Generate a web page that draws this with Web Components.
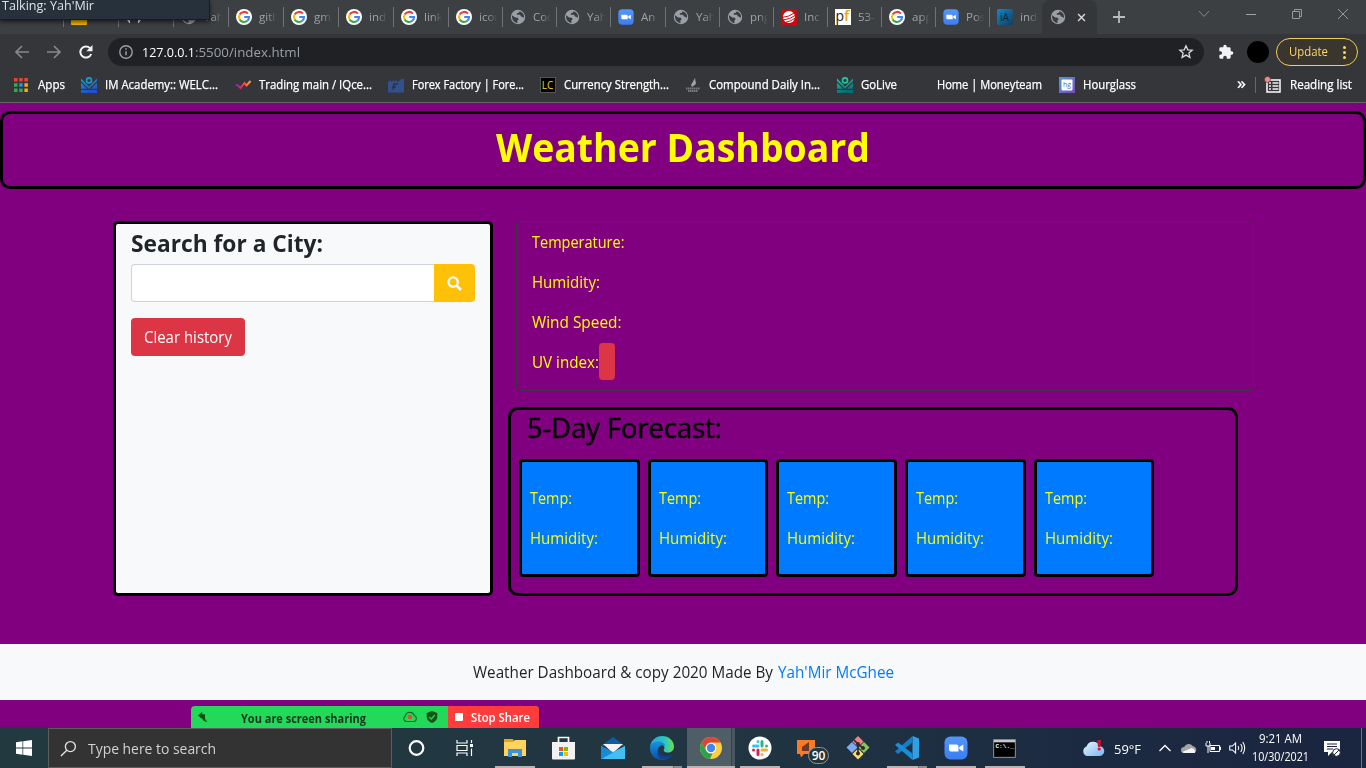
<!DOCTYPE html>
<html lang="en">
<head>
<meta charset="utf-8">
<title>Weather Dashboard</title>
<style>
html,body{margin:0;height:768px;overflow:hidden;background:#800080;font-family:"Open Sans","Noto Sans",sans-serif}
</style>
</head>
<body>
<desktop-screen></desktop-screen>
<script>
const define=(tag,render,after)=>customElements.define(tag,class extends HTMLElement{
  constructor(){super();this.attachShadow({mode:'open'});}
  connectedCallback(){this.shadowRoot.innerHTML=render(this);if(after)after(this);}
});

/* Text squeezed or stretched horizontally to the width given in "w". */
define('fit-text',el=>`<style>
:host{display:inline-block;white-space:nowrap;flex:none;width:${el.getAttribute('w')}px;font-size:${el.getAttribute('s')||12}px;line-height:${el.getAttribute('lh')||16}px;text-align:left}
span{display:inline-block;transform-origin:0 50%}</style><span><slot></slot></span>`,
el=>{const s=el.shadowRoot.querySelector('span');const n=s.offsetWidth?s.getBoundingClientRect().width:0;if(n)s.style.transform=`scaleX(${(+el.getAttribute('w'))/n})`;});

const ACADEMY=(id,a,b)=>`<defs><linearGradient id="${id}" x2=".4" y2="1"><stop stop-color="${a}"/><stop offset="1" stop-color="${b}"/></linearGradient></defs><path d="M0 1.500L8 9.500 16 1.500V4L8 12 0 4zM0 5.800L6 11.700H0zM16 5.800L10 11.700H16zM0 13H16V16H0z" fill="url(#${id})"/><circle cx="8" cy="3.400" r="2.500" fill="none" stroke="${a}" stroke-width="1.600"/>`;
const ICONS={
google:['0 0 16 16','<circle cx="8" cy="8" r="8" fill="#fff"/><g fill="none" stroke-width="2.1"><path d="M11.9 4.6A5 5 0 0 0 3.7 5.6" stroke="#ea4335"/><path d="M3.7 5.6A5 5 0 0 0 3.7 10.4" stroke="#fbbc05"/><path d="M3.7 10.4A5 5 0 0 0 11.3 11.8" stroke="#34a853"/><path d="M11.3 11.8A5 5 0 0 0 13 8H8.2" stroke="#4285f4"/></g>'],
globe:['0 0 16 16','<circle cx="8" cy="8" r="7.2" fill="#9aa0a6"/><path d="M2 6.2l3.2 2.2 2.6.3.8 1.6-1.2 1.3v2.6C4.200 13.500 2.200 11 2 8zM9.500 2.200l-.6 1.600-2 .5-.2 1.500h3.300l1 1.700 1.200.3 1.600 1.200c1-3-1.200-6-4.300-6.800z" fill="#3a3d40"/>'],
zoom:['0 0 24 24','<defs><linearGradient id="z" x2="0" y2="1"><stop stop-color="#5297f9"/><stop offset="1" stop-color="#3c7df4"/></linearGradient></defs><rect x="0.500" y="0.500" width="23" height="23" rx="6" fill="url(#z)"/><path d="M5 8.500h7.500a2 2 0 0 1 2 2v5H7a2 2 0 0 1-2-2zM15.300 11l4-2.500v7l-4-2.500z" fill="#fff"/>'],
red:['0 0 16 16','<rect width="16" height="16" fill="#c80b10"/><circle cx="8" cy="8" r="6" fill="#fff"/><path d="M1 8.500Q8 8 14 3.500M2 11Q9 10.500 15 6M4 13.500Q10 12.500 15 8.500" fill="none" stroke="#c80b10"/>'],
pf:['0 0 16 16','<rect width="16" height="16" fill="#fff"/><text x="0.500" y="12" font-family="Open Sans" font-size="14" fill="#222">p</text><text x="9" y="12" font-family="Open Sans" font-weight="600" font-size="15" fill="#e7a80c">f</text>'],
ia:['0 0 16 16','<defs><linearGradient id="i" x2="1" y2="1"><stop stop-color="#1686c9"/><stop offset="1" stop-color="#143c5b"/></linearGradient></defs><rect width="16" height="16" rx="1.500" fill="url(#i)"/><text x="3" y="12" font-family="Open Sans" font-size="10" fill="#0a2740">iA</text>'],
back:['0 0 16 16','<path d="M15 8H2M8 2L2 8l6 6" fill="none" stroke="#85888b" stroke-width="1.700"/>'],
fwd:['0 0 16 16','<path d="M1 8h13M8 2l6 6-6 6" fill="none" stroke="#85888b" stroke-width="1.700"/>'],
reload:['0 0 16 16','<path d="M13.200 10A5.600 5.600 0 1 1 12 4.100" fill="none" stroke="#f1f3f4" stroke-width="2"/><path d="M14.500 1v6.200H8.300z" fill="#f1f3f4"/>'],
info:['0 0 16 16','<circle cx="8" cy="8" r="6.200" fill="none" stroke="#9aa0a6" stroke-width="1.400"/><path d="M8 7.200v4M8 4.300v1.500" stroke="#9aa0a6" stroke-width="1.500"/>'],
star:['0 0 16 16','<path d="M8 1.800l1.800 4 4.400.4-3.300 2.900 1 4.300L8 11.100l-3.900 2.300 1-4.300L1.800 6.200l4.400-.4z" fill="none" stroke="#dadce0" stroke-width="1.300"/>'],
puzzle:['0 0 24 24','<path d="M20.500 11H19V7a2 2 0 0 0-2-2h-4V3.500a2.500 2.500 0 0 0-5 0V5H4a2 2 0 0 0-2 2v3.800h1.500a2.700 2.700 0 0 1 0 5.400H2V20a2 2 0 0 0 2 2h3.800v-1.500a2.700 2.700 0 0 1 5.400 0V22H17a2 2 0 0 0 2-2v-4h1.500a2.500 2.500 0 0 0 0-5z" fill="#f1f3f4"/>'],
apps:['0 0 14 14','<path d="M0 0h3.500v3.500H0zM5.200 0h3.500v3.500H5.200zM10.400 0h3.500v3.500h-3.500z" fill="#ea4335"/><path d="M0 5.200h3.500v3.500H0zM0 10.400h3.500v3.500H0zM5.200 10.400h3.500v3.500H5.200z" fill="#34a853"/><path d="M5.200 5.200h3.500v3.500H5.200z" fill="#2a8cf0"/><path d="M10.400 5.200h3.500v3.500h-3.500zM10.400 10.400h3.500v3.500h-3.500z" fill="#fbac05"/>'],
im:['0 0 16 16',ACADEMY('m','#159fcf','#2250cf')],
live:['0 0 16 16',ACADEMY('l','#20c9a3','#056c78')],
trend:['0 0 16 16','<defs><linearGradient id="t"><stop stop-color="#7a20b0"/><stop offset=".5" stop-color="#e93a55"/><stop offset="1" stop-color="#ffa62c"/></linearGradient></defs><path d="M.5 7.500l2.500 1 2.500 2.500 4-5 2 2.500 4-4.500" fill="none" stroke="url(#t)" stroke-width="2"/>'],
ff:['0 0 16 16','<path d="M0 5l3-2v2l3-2v2l3-2v2l3-1.500L13 2l3-.5v14H0z" fill="#33508b"/><path d="M5 13l1-6h4M4 10h4" stroke="#263448" stroke-width="1.300" fill="none"/>'],
lc:['0 0 16 16','<rect x=".5" y=".5" width="15" height="15" fill="#000" stroke="#555"/><text x="1.700" y="11.500" font-family="Open Sans" font-size="10" fill="#f6d716">LC</text>'],
comp:['0 0 16 16','<path d="M6 8L10 1l1 6-4 3z" fill="#a0a3a6"/><path d="M1 11.500h14M3 14h10" stroke="#777b80" stroke-width="1.800" stroke-dasharray="1.500 .5"/>'],
hg:['0 0 16 16','<defs><linearGradient id="h" x2="1" y2="1"><stop stop-color="#4a9ddc"/><stop offset="1" stop-color="#7b48b8"/></linearGradient></defs><rect width="16" height="16" fill="url(#h)"/><rect x="2.500" y="2.500" width="11" height="11" rx="1" fill="#fff"/><text x="4" y="10" font-family="Open Sans" font-size="7" fill="#5a6bc5">hg</text>'],
list:['0 0 16 16','<rect x="2" y="3" width="13" height="12" fill="none" stroke="#f1f3f4" stroke-width="1.600"/><path d="M4 6h2M7.500 6h6M4 9h2M7.500 9h6M4 12h2M7.500 12h6" stroke="#f1f3f4" stroke-width="1.300"/><circle cx="2.500" cy="2.500" r="3" fill="#f28b82" stroke="#35363a" stroke-width=".6"/>'],
search:['0 0 16 16','<circle cx="6.500" cy="6.500" r="5" fill="none" stroke="#f8f9fa" stroke-width="2.500"/><path d="M10 10l5 5" stroke="#f8f9fa" stroke-width="3"/>'],
lens:['0 0 18 18','<circle cx="11" cy="7" r="5.300" fill="none" stroke="#e4e4e4" stroke-width="1.400"/><path d="M7.200 10.800L1 17" stroke="#e4e4e4" stroke-width="1.400"/>'],
win:['0 0 16 16','<path d="M0 2.200l6.500-.9v6.300H0zM7.200 1.200L16 0v7.600H7.200zM0 8.400h6.500v6.300L0 13.800zM7.200 8.400H16V16l-8.800-1.200z" fill="#fff"/>'],
cortana:['0 0 24 24','<circle cx="11.500" cy="12" r="6.800" fill="none" stroke="#fff" stroke-width="2.200"/>'],
task:['0 0 24 24','<path d="M3 4v3h10V4M3 20v-3h10v3M3 9.500h10v5H3z M17.500 4v3M17.500 12.500v7.500" fill="none" stroke="#fff" stroke-width="1.200"/><rect x="16" y="8" width="3" height="3" fill="#fff"/>'],
folder:['0 0 24 24','<path d="M1 3h9l1 2v4H1z" fill="#e7a512"/><path d="M1 6h9l2-2h11v16H1z" fill="#ffd45e"/><path d="M5 21v-8h14v8h-4v-4H9v4z" fill="#3b93de"/>'],
store:['0 0 24 24','<path d="M6.500 7V1.500h10V7" fill="none" stroke="#fff" stroke-width="1.700"/><path d="M0 6h23v16.500a1 1 0 0 1-1 1H1a1 1 0 0 1-1-1z" fill="#f2f2f2"/><path d="M7 11h4v4H7z" fill="#f25022"/><path d="M12 11h4v4h-4z" fill="#7fba00"/><path d="M7 16h4v4H7z" fill="#00a4ef"/><path d="M12 16h4v4h-4z" fill="#ffb900"/>'],
mail:['0 0 24 24','<path d="M0 10L12 1l12 9z" fill="#0c5ea8"/><path d="M2 8h20l-10 9z" fill="#f3f3f3"/><path d="M0 10l12 6 12-6v13H0z" fill="#29a5e6"/><path d="M0 23L24 10v13z" fill="#42c0f5"/><path d="M0 10l12 6.500L0 23z" fill="#168bd4"/>'],
edge:['0 0 24 24','<defs><linearGradient id="e1"><stop stop-color="#23a9e0"/><stop offset=".6" stop-color="#2cc4c4"/><stop offset="1" stop-color="#6adf4d"/></linearGradient><linearGradient id="e2" x2="0" y2="1"><stop stop-color="#1593dd"/><stop offset="1" stop-color="#0b4fa6"/></linearGradient></defs><path d="M0 11C1 4 6 0 12 0c7 0 12 5 12 10.500 0 4-3 6-6 6-3.500 0-5-1.500-4-3 1.500-3-1-5.500-5-5.500-5 0-8 2-9 3z" fill="url(#e1)"/><path d="M0 12c0-4 4-6.500 8.500-6.500C13 5.500 15 8 15 10c-4-2-7 1-7 5 0 4 4 7.500 8 7 3-.3 5-2 6-3-2 3.500-6 5-10 5C5 24 0 19 0 12z" fill="url(#e2)"/><path d="M9 11c-2 6 3 10 8 9 3-.4 5-1.500 5-1-2 4-7 5-10 4-5-1-6-7-3-12z" fill="#10418a"/>'],
chrome:['0 0 24 24','<circle cx="12" cy="12" r="11" fill="#ffcd40"/><path d="M2.500 6.500A11 11 0 0 1 21.500 6.500H12A5.500 5.500 0 0 0 7.200 14.700z" fill="#db4437"/><path d="M2.500 6.500L7.200 14.700A5.500 5.500 0 0 0 13.500 17.300L11 23A11 11 0 0 1 2.500 6.500z" fill="#2ba24c"/><circle cx="12" cy="12" r="5.300" fill="#fff"/><circle cx="12" cy="12" r="4.200" fill="#4285f4"/>'],
slack:['0 0 24 24','<circle cx="12" cy="12" r="11.500" fill="#fff"/><g stroke-width="3" stroke-linecap="round"><path d="M5.500 10H10M10 5.500v0" stroke="#36c5f0"/><path d="M14 5.500V10M18.500 10v0" stroke="#2eb67d"/><path d="M14 14h4.500M14 18.500v0" stroke="#ecb22e"/><path d="M10 14v4.500M5.500 14v0" stroke="#e01e5a"/></g>'],
xampp:['0 0 32 26','<path d="M0 1h18v14h-11l-3 3.500-1-3.500H0z" fill="#fb7a24"/><path d="M5 12V8l7-5v9z" fill="#6b3a22"/><rect x="11.500" y="8.500" width="20" height="16" rx="8" fill="#26343b" stroke="#8c959b"/><text x="21.500" y="21" text-anchor="middle" font-family="Open Sans" font-weight="600" font-size="12" fill="#fff">90</text>'],
git:['0 0 24 24','<path d="M12 0l5.500 5.500L12 11 6.500 5.500z" fill="#f1827f"/><path d="M6 6l5.500 5.500L6 17 .5 11.500z" fill="#7faaf3"/><path d="M18 6l5.500 5.500L18 17l-5.500-5.500z" fill="#84c95b"/><path d="M12 12.500l5.500 5.500L12 23.500 6.500 18z" fill="#ffe066"/><path d="M8 4l4 4v10M12 8l5 4" fill="none" stroke="#302c2b" stroke-width="1.700"/><g fill="#302c2b"><circle cx="12" cy="8" r="2"/><circle cx="17" cy="12" r="2"/><circle cx="12" cy="17.500" r="2"/></g>'],
code:['0 0 24 24','<path d="M17.500 0L24 2.500v19L17.500 24z" fill="#2f9fe8"/><path d="M17.500 0v6.500L3 18 0 15.500z" fill="#147dc5"/><path d="M17.500 24v-6.500L3 6.500 0 9z" fill="#168ed9"/>'],
cmd:['0 0 24 20','<rect x=".7" y=".7" width="22.600" height="18.600" fill="#000" stroke="#999"/><path d="M1 1h22v2.500H1z" fill="#c8c8c8"/><text x="2.500" y="10" font-family="Liberation Mono" font-weight="700" font-size="6.500" fill="#fff">C:\\._</text>'],
weather:['0 0 22 18','<defs><linearGradient id="w" x2="1" y2="1"><stop stop-color="#e8f4ff"/><stop offset="1" stop-color="#77b7ef"/></linearGradient></defs><path d="M5 17a5 5 0 0 1-.5-9.500A7 7 0 0 1 17.500 7 5 5 0 0 1 17 17z" fill="url(#w)"/><path d="M15.300 1h3.700l-.7 7h-2.300z" fill="#d7102f"/><circle cx="17.200" cy="10" r="1.600" fill="#d7102f"/>'],
up:['0 0 12 8','<path d="M.5 7L6 1.500 11.500 7" fill="none" stroke="#fff" stroke-width="1.300"/>'],
drive:['0 0 16 12','<path d="M3 11a3 3 0 0 1 0-6A4.500 4.500 0 0 1 11 4a4 4 0 0 1 2 7z" fill="#a5a5a5"/><path d="M1 10l9-4a4 4 0 0 1 3 5H3z" fill="#f5f5f5"/>'],
battery:['0 0 16 14','<path d="M5 4.500h9.500v6H5zM14.500 6h1v3M1 2v3h4V2M3 5v7M2 0v2M4.500 0v2" fill="none" stroke="#fff"/><path d="M6 6h4v3H6z" fill="#fff"/>'],
sound:['0 0 16 14','<path d="M.7 5h2.500l3-3v10l-3-3H.7zM8.500 5q1.500 2 0 4M11 3q2.600 4 0 8M13 1q3.500 6 0 12" fill="none" stroke="#fff"/>'],
notice:['0 0 17 17','<path d="M0 1h16v11h-8l-4 4v-4H0z" fill="#fff"/><path d="M3 4h10M3 6.500h10M3 9h6" stroke="#1b2740"/><circle cx="12.500" cy="12.500" r="3.800" fill="#fff" stroke="#1b2740"/><path d="M10 15l5-5" stroke="#1b2740"/>'],
arrow:['0 0 12 12','<path d="M5.200 .8L1 4.500 5.200 8V6.200V7Q6 11 10.500 10.800 8 9.500 8 7V3.200H5.200z" fill="#104f14"/>'],
cloud:['0 0 16 12','<path d="M4 10.500a3 3 0 0 1-.7-5.500 4.700 4.700 0 0 1 9-.5 3.200 3.200 0 0 1 0 6z" fill="none" stroke="#136d28" stroke-width="1.200"/><circle cx="8" cy="6" r="2.300" fill="#f0443e"/>'],
shield:['0 0 12 12','<path d="M6 0l5.300 2v4Q11 10 6 12 1 10 .7 6V2z" fill="#155417"/><path d="M3.300 6l2 2 3.500-4" fill="none" stroke="#23d959" stroke-width="1.200"/>'],
close:['0 0 10 10','<path d="M1.200 1.200l7.600 7.600M8.800 1.200L1.200 8.800" stroke="#dadce0" stroke-width="1.500"/>'],
plus:['0 0 12 12','<path d="M6 0v12M0 6h12" stroke="#b9bbbd" stroke-width="1.800"/>'],
down:['0 0 12 8','<path d="M1 1l5 5.500L11 1" fill="none" stroke="#83868a"/>'],
min:['0 0 10 10','<path d="M0 5.500h10" stroke="#a0a2a5"/>'],
restore:['0 0 10 10','<path d="M.5 2.500h7v7h-7zM2.500 2.500v-2h7v7h-2" fill="none" stroke="#96999c"/>'],
x:['0 0 10 10','<path d="M0 0l10 10M10 0L0 10" stroke="#96999c"/>'],
yellow:['0 0 16 16','<rect width="16" height="16" rx="1" fill="#f4b400"/>'],
github:['0 0 16 16','<circle cx="8" cy="8" r="7.500" fill="#f1f3f4"/><path d="M4 16v-5q-2-3 0-6l2 1h4l2-1q2 3 0 6v5z" fill="#3a3d40"/>']
};
define('ui-icon',el=>{const i=ICONS[el.getAttribute('name')];const w=el.getAttribute('w')||16,h=el.getAttribute('h')||w;
return `<style>:host{display:block;flex:none;width:${w}px;height:${h}px}svg{display:block;overflow:visible}</style><svg width="${w}" height="${h}" viewBox="${i[0]}" preserveAspectRatio="none">${i[1]}</svg>`;});

define('browser-tab',el=>`<style>
:host{display:flex;flex:none;box-sizing:border-box;width:54px;height:34px;align-items:center;position:relative;padding-left:8px}
:host([wide]){width:55px}
:host::before{content:"";width:1px;height:20px;background:#707376;position:absolute;left:0;top:7px}
.t{margin-left:7px;width:19px;overflow:hidden;color:#9fa2a6;font-size:11.500px;line-height:16px;white-space:nowrap;-webkit-mask-image:linear-gradient(90deg,#000 45%,transparent 95%)}
</style><ui-icon name="${el.getAttribute('icon')}"></ui-icon><span class="t"><slot></slot></span>`);

define('book-mark',el=>`<style>:host{display:flex;flex:none;align-items:center;height:28px;color:#fff;gap:${el.getAttribute('gap')||8}px;width:${el.getAttribute('span')}px;box-sizing:border-box;-webkit-text-stroke:.25px #fff}.e{width:16px}ui-icon{-webkit-text-stroke:0}fit-text{margin-top:-3px}</style>
${el.getAttribute('icon')?`<ui-icon name="${el.getAttribute('icon')}" w="${el.getAttribute('iw')||16}"></ui-icon>`:'<i class="e"></i>'}<fit-text s="11.700" w="${el.getAttribute('w')}"><slot></slot></fit-text>`);

define('browser-chrome',()=>`<style>
:host{display:block;height:103px;background:#35363a;box-sizing:border-box;border-bottom:1px solid #636467;position:relative}
.tabs{display:flex;height:34px;background:#3c4043;padding-left:63px}
.active{width:55px;height:34px;background:#35363a;border-radius:8px 8px 0 0;display:flex;align-items:center;box-sizing:border-box;padding-left:8px;gap:11px;flex:none}
.ctl{display:flex;align-items:center;height:28px;margin-left:auto;padding-right:18px;gap:36px}
.plus{margin:11px 0 0 16px}
.bar{display:flex;height:35px;align-items:center;box-sizing:border-box;padding:1px 8px 0 14px}
.url{display:flex;align-items:center;height:28px;flex:1;background:#202124;border-radius:14px;margin-left:14px;padding:0 10px;box-sizing:border-box;color:#fff}
.url fit-text{margin-left:8px}.url .rest{margin-left:0;color:#9aa0a6}.url ui-icon:last-child{margin-left:auto}
.dot{width:22px;height:22px;border-radius:50%;background:#000;margin:0 7px 0 13px}
.upd{box-sizing:border-box;width:82px;height:28px;border:1px solid #f5cd57;border-radius:14px;background:#3b362d;color:#fdd663;display:flex;align-items:center;padding-left:12px;gap:15px}
.dots{display:grid;gap:2px}.dots i{width:3px;height:3px;border-radius:50%;background:#fdd663}
.books{display:flex;height:33px;padding:0 14px 1px 14px;align-items:center;box-sizing:border-box}
.end{margin-left:auto;display:flex;align-items:center;color:#fff}
.end .s{width:1px;height:16px;background:#66686c;margin:0 9px}
.end .rl{margin:-3px 0 0 9px;-webkit-text-stroke:.25px #fff}.end .m{margin-top:-4px;-webkit-text-stroke:.3px #fff}
.talk{position:absolute;left:0;top:0;width:210px;height:20px;background:#26313b;color:#dfe2e5;box-shadow:0 2px 4px #0009;box-sizing:border-box;border-right:1px solid #171d23;border-bottom:1px solid #171d23}
.talk fit-text{position:absolute;left:2px;top:-1px}
</style>
<div class="tabs">
<browser-tab wide icon="yellow"></browser-tab><browser-tab wide icon="github"></browser-tab><browser-tab wide icon="globe">Yah</browser-tab>
<browser-tab wide icon="google">gitl</browser-tab><browser-tab wide icon="google">gma</browser-tab><browser-tab wide icon="google">inde</browser-tab><browser-tab wide icon="google">link</browser-tab><browser-tab icon="google">icon</browser-tab>
<browser-tab icon="globe">Cod</browser-tab><browser-tab icon="globe">Yah</browser-tab><browser-tab icon="zoom" wide>An</browser-tab><browser-tab icon="globe">Yah</browser-tab><browser-tab icon="globe">png</browser-tab>
<browser-tab icon="red">Inc</browser-tab><browser-tab icon="pf">53-</browser-tab><browser-tab icon="google">app</browser-tab><browser-tab icon="zoom">Pos</browser-tab><browser-tab icon="ia" style="width:53px">inde</browser-tab>
<div class="active"><ui-icon name="globe"></ui-icon><ui-icon name="close" w="9"></ui-icon></div>
<ui-icon class="plus" name="plus" w="12"></ui-icon>
<div class="ctl"><ui-icon name="down" w="12" h="8"></ui-icon><ui-icon name="min" w="10"></ui-icon><ui-icon name="restore" w="10"></ui-icon><ui-icon name="x" w="10"></ui-icon></div>
</div>
<div class="bar"><ui-icon name="back"></ui-icon><ui-icon name="fwd" style="margin:0 16px"></ui-icon><ui-icon name="reload"></ui-icon>
<div class="url"><ui-icon name="info"></ui-icon><fit-text s="13.300" w="53">127.0.0.1</fit-text><fit-text class="rest" s="13.300" w="105">:5500/index.html</fit-text><ui-icon name="star"></ui-icon></div>
<ui-icon name="puzzle" w="16" style="margin-left:14px"></ui-icon><i class="dot"></i><div class="upd"><fit-text s="12" w="39">Update</fit-text><div class="dots"><i></i><i></i><i></i></div></div></div>
<div class="books">
<book-mark icon="apps" iw="14" gap="10" span="67" w="27">Apps</book-mark><book-mark icon="im" span="154" w="113">IM Academy:: WELC...</book-mark><book-mark icon="trend" span="153" w="113">Trading main / IQce...</book-mark><book-mark icon="ff" span="152" w="112">Forex Factory | Fore...</book-mark><book-mark icon="lc" span="145" w="105">Currency Strength...</book-mark><book-mark icon="comp" span="152" w="111">Compound Daily In...</book-mark><book-mark icon="live" span="76" w="36">GoLive</book-mark><book-mark span="146" w="105">Home | Moneyteam</book-mark><book-mark icon="hg" span="90" w="53">Hourglass</book-mark>
<div class="end"><fit-text class="m" s="17" w="9">»</fit-text><i class="s"></i><ui-icon name="list"></ui-icon><fit-text class="rl" s="11.700" w="62">Reading list</fit-text></div>
</div>
<div class="talk"><fit-text s="11.800" lh="12" w="92">Talking: Yah'Mir</fit-text></div>`);

define('search-card',()=>`<style>
:host{display:block;box-sizing:border-box;width:380px;height:375px;border:3px solid #000;border-radius:5px;background:#f8f9fa;padding:5px 15px;color:#212529}
.t{font-weight:700;display:block;margin-bottom:6px}
.g{display:flex;height:38px}
input{flex:1;min-width:0;box-sizing:border-box;border:1px solid #ced4da;border-right:0;border-radius:4px 0 0 4px;background:#fff;outline:0;padding:0 12px}
.b{width:41px;background:#ffc107;border-radius:0 4px 4px 0;display:flex;align-items:center;justify-content:center}
.c{border:0;margin-top:16px;width:114px;height:38px;border-radius:4px;background:#dc3545;color:#fff;display:flex;align-items:center;padding:0 0 0 13px;font-family:inherit}
</style><fit-text class="t" s="23.300" lh="29" w="192">Search for a City:</fit-text><div class="g"><input aria-label="City"><div class="b"><ui-icon name="search" w="15"></ui-icon></div></div><button class="c"><fit-text s="15.700" lh="24" w="88">Clear history</fit-text></button>`);

define('current-card',()=>`<style>
:host{display:block;box-sizing:border-box;width:738px;height:170px;margin-left:8px;border:1px solid #343a40;border-radius:4px;padding:8px 15px;color:#ff0}
.r{height:24px;margin-bottom:16px;display:flex;align-items:center}
b{width:16px;height:37px;border-radius:4px;background:#dc3545;margin-top:-1px}
</style><div class="r"><fit-text s="15.700" lh="24" w="92.500">Temperature:</fit-text></div><div class="r"><fit-text s="15.700" lh="24" w="68">Humidity:</fit-text></div><div class="r"><fit-text s="15.700" lh="24" w="89.500">Wind Speed:</fit-text></div><div class="r"><fit-text s="15.700" lh="24" w="67">UV index:</fit-text><b></b></div>`);

define('day-card',()=>`<style>
:host{display:flex;flex-direction:column;gap:16px;box-sizing:border-box;width:120.500px;height:118px;border:3px solid #000;border-radius:4px;background:#007bff;color:#ff0;padding:24px 8px}
</style><fit-text s="15.700" lh="24" w="42">Temp:</fit-text><fit-text s="15.700" lh="24" w="68">Humidity:</fit-text>`);

define('forecast-panel',()=>`<style>
:host{display:block;box-sizing:border-box;width:730px;height:189px;margin-top:16px;border:3px solid #000;border-radius:10px;padding:1px 8px;color:#000}
.t{display:block;-webkit-text-stroke:.5px #000;margin:0 0 14px 8px}.d{display:flex;gap:8.200px}
</style><fit-text class="t" s="27" lh="34" w="195">5-Day Forecast:</fit-text><div class="d"><day-card></day-card><day-card></day-card><day-card></day-card><day-card></day-card><day-card></day-card></div>`);

define('weather-page',()=>`<style>
:host{display:block;height:625px;background:#800080;box-sizing:border-box;padding-top:8px;position:relative}
header{height:78px;box-sizing:border-box;border:3px solid #000;border-radius:10px;color:#ff0;font-weight:700;text-align:center;padding-top:9px}
main{display:flex;gap:15px;margin:32px 0 48px 113px}
footer{height:56px;background:#f8f9fa;display:flex;align-items:center;justify-content:center;gap:5px;color:#212529}
.a{color:#007bff}
.share{position:absolute;left:191px;bottom:0;width:348px;height:22px;border-radius:4px 4px 0 0;overflow:hidden;background:#23d959;display:flex;align-items:center;font-weight:700;color:#17361f}
.share .stop{margin-left:auto;width:91px;height:22px;background:#ff3c3c;color:#fff;display:flex;align-items:center;font-weight:600}
.share fit-text{margin-top:1px}
.stop i{width:8px;height:8px;background:#fff;border-radius:1px;margin:0 8px 0 7px}
</style><header><fit-text s="39.500" lh="48" w="374">Weather Dashboard</fit-text></header>
<main><search-card></search-card><div><current-card></current-card><forecast-panel></forecast-panel></div></main>
<footer><fit-text s="15.700" lh="24" w="300">Weather Dashboard &amp; copy 2020 Made By</fit-text><fit-text class="a" s="15.700" lh="24" w="116">Yah'Mir McGhee</fit-text></footer>
<div class="share"><ui-icon name="arrow" w="12" style="margin:0 32px 0 6px"></ui-icon><fit-text s="11.700" w="125">You are screen sharing</fit-text><ui-icon name="cloud" w="16" h="12" style="margin:0 8px 0 36px"></ui-icon><ui-icon name="shield" w="12"></ui-icon><div class="stop"><i></i><fit-text s="12" w="59">Stop Share</fit-text></div></div>`);

define('task-item',el=>`<style>
:host{display:flex;flex:none;width:49px;height:40px;align-items:center;justify-content:center;position:relative}
:host([active]){background:linear-gradient(90deg,transparent 1px,#4f5e66 1px 45px,#35454f 45px 46px,#48565f 46px)}
:host([open])::after{content:"";position:absolute;left:4.500px;right:4.500px;bottom:0;height:2px;background:#b9b3b2}
:host([multi])::after{background:linear-gradient(90deg,#b9b3b2 31px,#6e7479 31px 32px,#8d8e90 32px)}
:host([active])::after{left:1px;right:0;background:#b9b3b2}
</style><ui-icon name="${el.getAttribute('icon')}" w="${el.getAttribute('w')||24}" h="${el.getAttribute('h')||el.getAttribute('w')||24}"></ui-icon>`);

define('task-bar',()=>`<style>
:host{display:flex;height:40px;background:linear-gradient(90deg,#22393f,#213642 50%,#1c2a41 80%,#1a2540);color:#fff;align-items:center}
.w{width:48px;display:flex;justify-content:center}
.s{box-sizing:border-box;width:344px;height:40px;border:1px solid #5d5d5d;background:#333;color:#d2d2d2;display:flex;align-items:center;padding-left:11px;gap:11px}
.s fit-text{margin-top:-1px}
.tray{margin-left:auto;display:flex;align-items:center;height:40px}
.c{display:grid;justify-items:center;width:58px;margin:0 15px 0 5px;gap:2px}
.l{width:1px;height:40px;background:#6b7380;margin:0 4px 0 20px}
</style><div class="w"><ui-icon name="win"></ui-icon></div><div class="s"><ui-icon name="lens" w="17"></ui-icon><fit-text s="14.800" lh="20" w="128">Type here to search</fit-text></div>
<task-item icon="cortana"></task-item><task-item icon="task"></task-item><task-item icon="folder" open></task-item><task-item icon="store"></task-item><task-item icon="mail"></task-item><task-item icon="edge" open multi></task-item><task-item icon="chrome" open active></task-item><task-item icon="slack" open></task-item><task-item icon="xampp" w="32" h="26" style="padding:8px 0 0 8px;box-sizing:border-box"></task-item><task-item icon="git"></task-item><task-item icon="code" open multi></task-item><task-item icon="zoom" open></task-item><task-item icon="cmd" w="23" h="19" open></task-item>
<div class="tray"><ui-icon name="weather" w="22" h="18" style="margin-right:-1px;position:relative;left:-1px"></ui-icon><fit-text s="13.500" w="27" style="margin:1px 18px 0 10px">59°F</fit-text><ui-icon name="up" w="12" h="8"></ui-icon><ui-icon name="drive" w="17" h="12" style="margin:0 7px 0 10px"></ui-icon><ui-icon name="battery" w="16" h="14"></ui-icon><ui-icon name="sound" w="17" h="14" style="margin-left:8px"></ui-icon>
<div class="c"><fit-text s="12" w="43">9:21 AM</fit-text><fit-text s="12" w="57">10/30/2021</fit-text></div><ui-icon name="notice" w="17"></ui-icon><i class="l"></i></div>`);

define('desktop-screen',()=>`<style>:host{display:flex;flex-direction:column;width:1366px;height:768px;overflow:hidden}</style><browser-chrome></browser-chrome><weather-page></weather-page><task-bar></task-bar>`);
</script>
</body>
</html>
